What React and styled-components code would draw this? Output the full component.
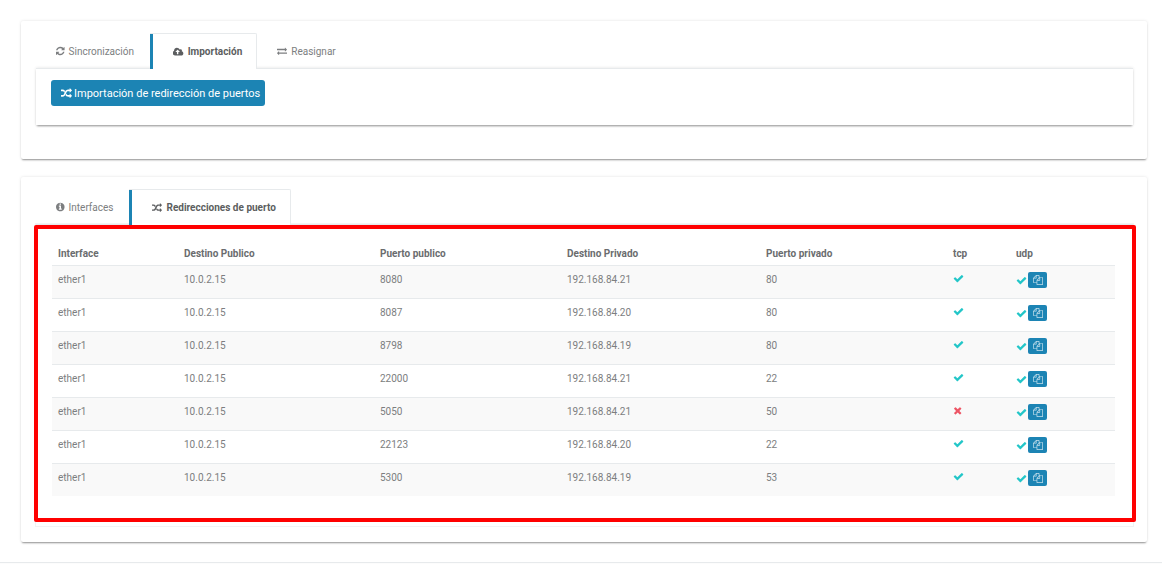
import React, { useState } from "react";
import styled, { createGlobalStyle } from "styled-components";

const GlobalStyle = createGlobalStyle`
  * { box-sizing: border-box; }
  html { background: #fff; }
  body {
    margin: 0;
    color: #7c7e80;
    background: #fff;
    font: 10px/15px Roboto, "Liberation Sans", sans-serif;
  }
  button { font: inherit; cursor: pointer; }
`;

const ICONS = {
  check: {
    box: "0 0 1792 1792",
    d: "M1671 566q0 40-28 68l-724 724-136 136q-28 28-68 28t-68-28l-136-136-362-362q-28-28-28-68t28-68l136-136q28-28 68-28t68 28l294 295 656-657q28-28 68-28t68 28l136 136q28 28 28 68z",
  },
  times: {
    box: "128 0 1664 1792",
    d: "M1490 1322q0 40-28 68l-136 136q-28 28-68 28t-68-28l-294-294-294 294q-28 28-68 28t-68-28l-136-136q-28-28-28-68t28-68l294-294-294-294q-28-28-28-68t28-68l136-136q28-28 68-28t68 28l294 294 294-294q28-28 68-28t68 28l136 136q28 28 28 68t-28 68l-294 294 294 294q28 28 28 68z",
  },
  info: {
    box: "128 0 1536 1792",
    d: "M1152 1376v-160q0-14-9-23t-23-9h-96v-512q0-14-9-23t-23-9h-320q-14 0-23 9t-9 23v160q0 14 9 23t23 9h96v320h-96q-14 0-23 9t-9 23v160q0 14 9 23t23 9h448q14 0 23-9t9-23zm-128-896v-160q0-14-9-23t-23-9h-192q-14 0-23 9t-9 23v160q0 14 9 23t23 9h192q14 0 23-9t9-23zm640 416q0 209-103 385.5t-279.5 279.5-385.5 103-385.5-103-279.5-279.5-103-385.5 103-385.5 279.5-279.5 385.5-103 385.5 103 279.5 279.5 103 385.5z",
  },
  random: {
    box: "0 0 1792 1792",
    d: "M666 481q-60 92-137 273-22-45-37-72.5t-40.5-63.5-51-56.5-63-35-81.5-14.5h-224q-14 0-23-9t-9-23v-192q0-14 9-23t23-9h224q250 0 410 225zm1126 799q0 14-9 23l-320 320q-9 9-23 9-13 0-22.5-9.5t-9.5-22.5v-192q-32 0-85 .5t-81 1-73-1-71-5-64-10.5-63-18.5-58-28.5-59-40-55-53.5-56-69.5q59-93 136-273 22 45 37 72.5t40.5 63.5 51 56.5 63 35 81.5 14.5h256v-192q0-14 9-23t23-9q12 0 24 10l319 319q9 9 9 23zm0-896q0 14-9 23l-320 320q-9 9-23 9-13 0-22.5-9.5t-9.5-22.5v-192h-256q-48 0-87 15t-69 45-51 61.5-45 77.5q-32 62-78 171-29 66-49.5 111t-54 105-64 100-74 83-90 68.5-106.5 42-128 16.5h-224q-14 0-23-9t-9-23v-192q0-14 9-23t23-9h224q48 0 87-15t69-45 51-61.5 45-77.5q32-62 78-171 29-66 49.5-111t54-105 64-100 74-83 90-68.5 106.5-42 128-16.5h256v-192q0-14 9-23t23-9q12 0 24 10l319 319q9 9 9 23z",
  },
  refresh: {
    box: "128 0 1536 1792",
    d: "M1639 1056q0 5-1 7-64 268-268 434.5t-478 166.5q-146 0-282.5-55t-243.5-157l-129 129q-19 19-45 19t-45-19-19-45v-448q0-26 19-45t45-19h448q26 0 45 19t19 45-19 45l-137 137q71 66 161 102t187 36q134 0 250-65t186-179q11-17 53-117 8-23 30-23h192q13 0 22.5 9.5t9.5 22.5zm25-800v448q0 26-19 45t-45 19h-448q-26 0-45-19t-19-45 19-45l138-138q-148-137-349-137-134 0-250 65t-186 179q-11 17-53 117-8 23-30 23h-199q-13 0-22.5-9.5t-9.5-22.5v-7q65-268 270-434.5t480-166.5q146 0 284 55.5t245 156.5l130-129q19-19 45-19t45 19 19 45z",
  },
  exchange: {
    box: "0 0 1792 1792",
    d: "M1792 1184v192q0 13-9.5 22.5t-22.5 9.5h-1376v192q0 13-9.5 22.5t-22.5 9.5q-12 0-24-10l-319-320q-9-9-9-22 0-14 9-23l320-320q9-9 23-9 13 0 22.5 9.5t9.5 22.5v192h1376q13 0 22.5 9.5t9.5 22.5zm0-544q0 14-9 23l-320 320q-9 9-23 9-13 0-22.5-9.5t-9.5-22.5v-192h-1376q-13 0-22.5-9.5t-9.5-22.5v-192q0-13 9.5-22.5t22.5-9.5h1376v-192q0-14 9-23t23-9q12 0 24 10l319 319q9 9 9 23z",
  },
  cloud: {
    box: "0 0 1920 1792",
    d: "M1216 864q0-14-9-23l-352-352q-9-9-23-9t-23 9l-351 351q-10 12-10 24 0 14 9 23t23 9h224v352q0 13 9.5 22.5t22.5 9.5h192q13 0 22.5-9.5t9.5-22.5v-352h224q13 0 22.5-9.5t9.5-22.5zm640 288q0 159-112.5 271.5t-271.5 112.5h-1088q-185 0-316.5-131.5t-131.5-316.5q0-130 70-240t188-165q-2-30-2-43 0-212 150-362t362-150q156 0 285.5 87t188.5 231q71-62 166-62 106 0 181 75t75 181q0 76-41 138 130 31 213.5 135.5t83.5 238.5z",
  },
  files: {
    box: "0 0 1792 1792",
    d: "M1696 384q40 0 68 28t28 68v1216q0 40-28 68t-68 28h-960q-40 0-68-28t-28-68v-288h-544q-40 0-68-28t-28-68v-672q0-40 20-88t48-76l408-408q28-28 76-48t88-20h416q40 0 68 28t28 68v328q68-40 128-40h416zm-544 213l-299 299h299v-299zm-640-384l-299 299h299v-299zm196 647l316-316v-416h-384v416q0 40-28 68t-68 28h-416v640h512v-256q0-40 20-88t48-76zm956 804v-1152h-384v416q0 40-28 68t-68 28h-416v640h896z",
  },
};

const Svg = styled.svg`
  display: block;
  flex: none;
  height: ${(p) => p.$size}px;
  fill: currentColor;
`;

function Icon({ name, size = 10, label }) {
  const { box, d } = ICONS[name];
  return (
    <Svg
      $size={size}
      viewBox={box}
      role={label ? "img" : undefined}
      aria-label={label}
      aria-hidden={label ? undefined : true}
    >
      <path d={d} />
    </Svg>
  );
}

const RAISED = "0 2px 2px -1px rgba(0, 0, 0, 0.4), 0 0 3px rgba(0, 0, 0, 0.12)";

const Page = styled.main`
  display: flex;
  flex-direction: column;
  gap: 18px;
  padding: 21px 15px 20px 21px;
`;

const Card = styled.section`
  padding: 12px 14px ${(p) => p.$bottom}px 15px;
  border-radius: 2px;
  background: #fff;
  box-shadow: ${RAISED};
`;

const TabList = styled.div`
  display: flex;
  height: 36px;
`;

const Tab = styled.button`
  display: flex;
  align-items: center;
  gap: 4px;
  padding: 0 16px 0 20px;
  border: 0 solid #e7eaec;
  border-width: ${(p) => (p.$active ? "1px 1px 0 0" : "0")};
  border-radius: 0 2px 0 0;
  background: #fff;
  color: ${(p) => (p.$active ? "#5c5e60" : "#7c7e80")};
  font-weight: ${(p) => (p.$active ? 700 : 400)};
  box-shadow: ${(p) => (p.$active ? "inset 3px 0 #1c84b4" : "none")};
  ${(p) => p.$active && "padding: 0 14px 0 23px; z-index: 1;"}
`;

const Panel = styled.div`
  position: relative;
  margin-top: -1px;
  padding: ${(p) => p.$pad};
  border-top: 1px solid #e7eaec;
  background: #fff;
  box-shadow: ${(p) => (p.$flat ? "0 0 0 1px #f1f3f4" : RAISED)};
`;

const PrimaryButton = styled.button`
  display: flex;
  align-items: center;
  gap: 2px;
  height: 26px;
  padding: 0 5px 0 10px;
  border: 0;
  border-radius: 3px;
  background: #1c84b4;
  color: #fff;
  font-size: 11px;
`;

const Frame = styled.div`
  position: absolute;
  inset: 0 -3px 4px -2px;
  border: 4px solid #f00;
  border-radius: 2px;
  pointer-events: none;
`;

const Table = styled.table`
  width: 100%;
  table-layout: fixed;
  border-collapse: separate;
  border-spacing: 0;
`;

const HeadCell = styled.th`
  width: ${(p) => p.$width}px;
  height: 25px;
  padding: 2px 6px 0;
  text-align: left;
  font-weight: 700;
  color: #6a6c6e;
`;

const Row = styled.tr`
  background: ${(p) => (p.$striped ? "#f9f9f9" : "#fff")};
`;

const Cell = styled.td`
  height: 33px;
  padding: 6px;
  border-top: 1px solid #e7eaec;
  vertical-align: top;
`;

const Status = styled.span`
  display: flex;
  align-items: center;
  gap: 1px;
  height: ${(p) => (p.$tall ? 16 : 13)}px;
  color: ${(p) => (p.$ok ? "#23c6c8" : "#ed5565")};
`;

const CopyButton = styled.button`
  display: flex;
  align-items: center;
  justify-content: center;
  width: 19px;
  height: 16px;
  padding: 0;
  border: 0;
  border-radius: 2px;
  background: #1c84b4;
  color: #c6e0ec;
`;

const Footer = styled.footer`
  height: 20px;
  margin-bottom: -20px;
  border-top: 1px solid #e7eaec;
  background: #fcfcfc;
`;

const Clip = styled.div`
  min-height: 100vh;
  overflow: hidden;
`;

const COLUMNS = [
  ["Interface", 126],
  ["Destino Publico", 196],
  ["Puerto publico", 187],
  ["Destino Privado", 199],
  ["Puerto privado", 187],
  ["tcp", 63],
  ["udp", 105],
];

const ROWS = [
  ["8080", "192.168.84.21", "80", true],
  ["8087", "192.168.84.20", "80", true],
  ["8798", "192.168.84.19", "80", true],
  ["22000", "192.168.84.21", "22", true],
  ["5050", "192.168.84.21", "50", false],
  ["22123", "192.168.84.20", "22", true],
  ["5300", "192.168.84.19", "53", true],
];

function Tabs({ items, initial, label }) {
  const [active, setActive] = useState(initial);
  return (
    <TabList role="tablist" aria-label={label}>
      {items.map(([icon, text], i) => (
        <Tab
          key={text}
          type="button"
          role="tab"
          aria-selected={i === active}
          $active={i === active}
          onClick={() => setActive(i)}
        >
          <Icon name={icon} />
          {text}
        </Tab>
      ))}
    </TabList>
  );
}

export default function App() {
  return (
    <Clip>
      <GlobalStyle />
      <Page>
        <Card $bottom={34}>
          <Tabs
            label="Acciones"
            initial={1}
            items={[
              ["refresh", "Sincronización"],
              ["cloud", "Importación"],
              ["exchange", "Reasignar"],
            ]}
          />
          <Panel $pad="11px 15px 19px">
            <PrimaryButton type="button">
              <Icon name="random" size={11} />
              Importación de redirección de puertos
            </PrimaryButton>
          </Panel>
        </Card>
        <Card $bottom={16}>
          <Tabs
            label="Detalles"
            initial={1}
            items={[
              ["info", "Interfaces"],
              ["random", "Redirecciones de puerto"],
            ]}
          />
          <Panel $flat $pad="15px 18px 30px 16px">
            <Table>
              <thead>
                <tr>
                  {COLUMNS.map(([name, width]) => (
                    <HeadCell key={name} scope="col" $width={width}>
                      {name}
                    </HeadCell>
                  ))}
                </tr>
              </thead>
              <tbody>
                {ROWS.map(([port, target, targetPort, tcp], i) => (
                  <Row key={port} $striped={i % 2 === 0}>
                    <Cell>ether1</Cell>
                    <Cell>10.0.2.15</Cell>
                    <Cell>{port}</Cell>
                    <Cell>{target}</Cell>
                    <Cell>{targetPort}</Cell>
                    <Cell>
                      <Status $ok={tcp}>
                        <Icon name={tcp ? "check" : "times"} size={11} label={tcp ? "Sí" : "No"} />
                      </Status>
                    </Cell>
                    <Cell>
                      <Status $ok $tall>
                        <Icon name="check" size={11} label="Sí" />
                        <CopyButton type="button" aria-label="Copiar">
                          <Icon name="files" />
                        </CopyButton>
                      </Status>
                    </Cell>
                  </Row>
                ))}
              </tbody>
            </Table>
            <Frame />
          </Panel>
        </Card>
      </Page>
      <Footer />
    </Clip>
  );
}
